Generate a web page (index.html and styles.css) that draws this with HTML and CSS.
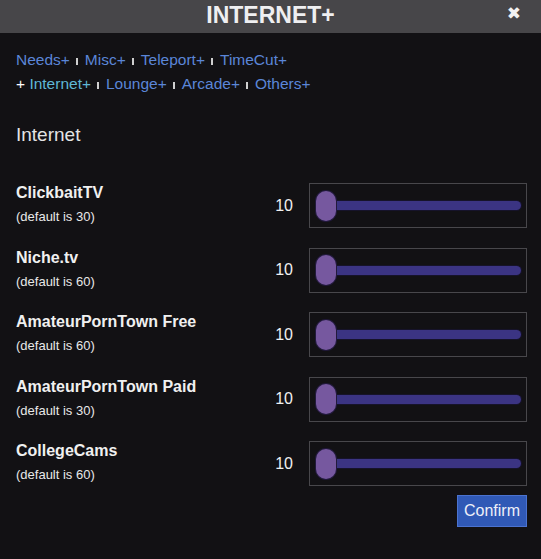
FILE: index.html
```html
<!DOCTYPE html>
<html lang="en">
<head>
  <meta charset="UTF-8">
  <title>INTERNET+</title>
  <link rel="stylesheet" href="styles.css">
</head>
<body>

<header class="topbar">
  INTERNET+
  <span class="close">&#10006;</span>
</header>

<div class="content">
  <div class="nav">
    <div class="nav-line">
      <a href="#">Needs+</a><span class="sep"></span><a href="#">Misc+</a><span class="sep"></span><a href="#">Teleport+</a><span class="sep"></span><a href="#">TimeCut+</a>
    </div>
    <div class="nav-line">
      <span class="plus">+</span> <a href="#" class="active">Internet+</a><span class="sep"></span><a href="#">Lounge+</a><span class="sep"></span><a href="#">Arcade+</a><span class="sep"></span><a href="#">Others+</a>
    </div>
  </div>

  <h2>Internet</h2>

  <div class="rows">
    <div class="row">
      <div class="info">
        <div class="name">ClickbaitTV</div>
        <div class="default">(default is 30)</div>
      </div>
      <div class="value">10</div>
      <div class="slider-box"><input type="range" min="10" max="100" value="10"></div>
    </div>
    <div class="row">
      <div class="info">
        <div class="name">Niche.tv</div>
        <div class="default">(default is 60)</div>
      </div>
      <div class="value">10</div>
      <div class="slider-box"><input type="range" min="10" max="100" value="10"></div>
    </div>
    <div class="row">
      <div class="info">
        <div class="name">AmateurPornTown Free</div>
        <div class="default">(default is 60)</div>
      </div>
      <div class="value">10</div>
      <div class="slider-box"><input type="range" min="10" max="100" value="10"></div>
    </div>
    <div class="row">
      <div class="info">
        <div class="name">AmateurPornTown Paid</div>
        <div class="default">(default is 30)</div>
      </div>
      <div class="value">10</div>
      <div class="slider-box"><input type="range" min="10" max="100" value="10"></div>
    </div>
    <div class="row">
      <div class="info">
        <div class="name">CollegeCams</div>
        <div class="default">(default is 60)</div>
      </div>
      <div class="value">10</div>
      <div class="slider-box"><input type="range" min="10" max="100" value="10"></div>
    </div>
  </div>

  <div class="actions">
    <button>Confirm</button>
  </div>
</div>

</body>
</html>
```

FILE: styles.css
```css
body {
  font-family: 'Liberation Sans', Arial, sans-serif;
  background-color: #121114;
  margin: 0;
  padding: 0;
  color: #eeeeee;
}

.topbar {
  position: relative;
  background-color: #474649;
  color: #efeff1;
  text-align: center;
  height: 33px;
  line-height: 31px;
  font-size: 23px;
  font-weight: bold;
}

.close {
  position: absolute;
  right: 20px;
  top: 0;
  font-family: 'DejaVu Sans', sans-serif;
  font-size: 17px;
  line-height: 27px;
  color: #f2f2f2;
}

.content {
  padding: 15px 14px 0 16px;
}

.nav {
  font-size: 15.5px;
  line-height: 24px;
}

.nav a {
  color: #5b86d8;
  text-decoration: none;
}

.nav a.active {
  color: #5fb8d6;
}

.nav .plus {
  color: #ffffff;
}

.sep {
  display: inline-block;
  width: 2px;
  height: 7px;
  margin: 0 7px 0 6px;
  background-color: #cfcfcf;
  vertical-align: baseline;
}

h2 {
  font-size: 19px;
  font-weight: normal;
  line-height: 24px;
  margin: 27px 0 36px;
  color: #e4e4e4;
}

.rows {
  display: flex;
  flex-direction: column;
  gap: 19.5px;
}

.row {
  display: flex;
  align-items: center;
  height: 45px;
}

.info {
  flex: 1;
  align-self: flex-start;
}

.name {
  font-size: 16px;
  font-weight: bold;
  line-height: 20px;
  color: #f0f0f0;
}

.default {
  font-size: 13px;
  line-height: 18px;
  margin-top: 5px;
  color: #e8e8e8;
}

.value {
  font-size: 16px;
  margin-right: 16px;
  color: #f0f0f0;
}

.slider-box {
  width: 205px;
  height: 43px;
  border: 1px solid #48474b;
  display: flex;
  align-items: center;
  padding: 0 5px 0 6px;
}

.slider-box input {
  -webkit-appearance: none;
  appearance: none;
  width: 205px;
  height: 30px;
  margin: 0;
  background: transparent;
}

.slider-box input::-webkit-slider-runnable-track {
  height: 9px;
  background-color: #3b3483;
  border-radius: 5px;
  box-shadow: 0 0 0 1px #16132a;
}

.slider-box input::-webkit-slider-thumb {
  -webkit-appearance: none;
  width: 20px;
  height: 30px;
  margin-top: -10.5px;
  border-radius: 10px;
  background-color: #76589f;
  box-shadow: 0 0 0 1px #221a3c;
}

.actions {
  display: flex;
  justify-content: flex-end;
  margin-top: 9px;
}

button {
  font-family: 'Liberation Sans', Arial, sans-serif;
  font-size: 16px;
  color: #eef0f8;
  background-color: #3059b6;
  border: 1px solid #4b73d0;
  width: 70px;
  height: 32px;
  padding: 0;
  cursor: pointer;
}
```
